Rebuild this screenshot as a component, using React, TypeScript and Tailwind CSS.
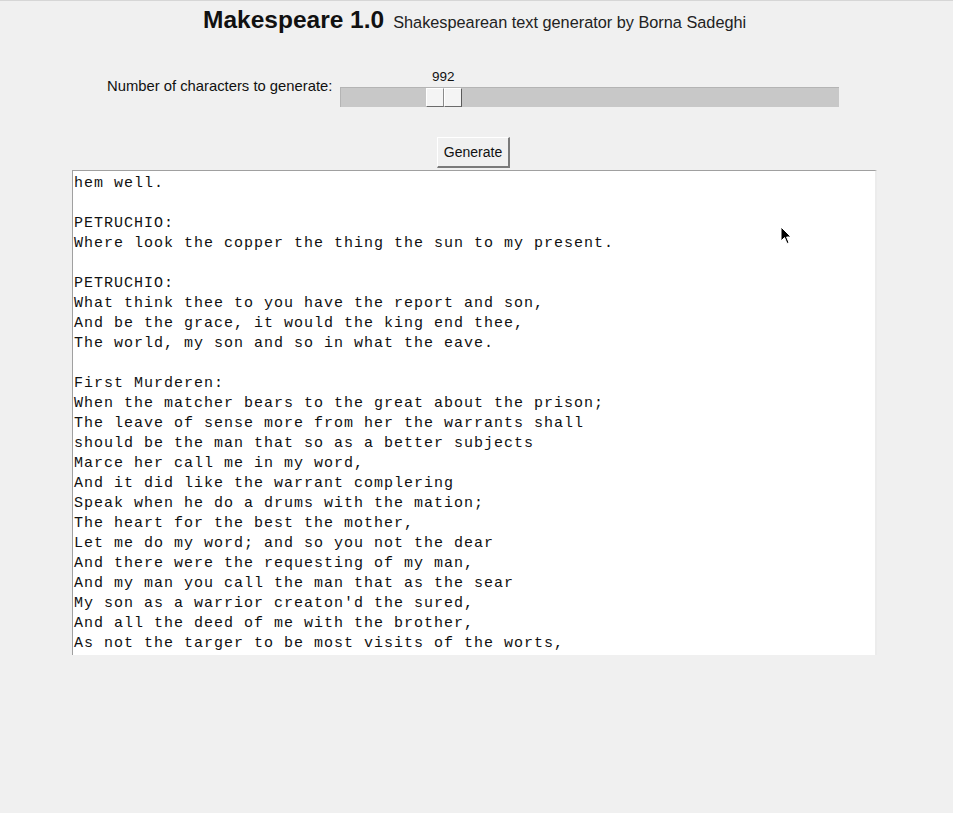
import React from "react";

const lines = [
  "hem well.",
  "",
  "PETRUCHIO:",
  "Where look the copper the thing the sun to my present.",
  "",
  "PETRUCHIO:",
  "What think thee to you have the report and son,",
  "And be the grace, it would the king end thee,",
  "The world, my son and so in what the eave.",
  "",
  "First Murderen:",
  "When the matcher bears to the great about the prison;",
  "The leave of sense more from her the warrants shall",
  "should be the man that so as a better subjects",
  "Marce her call me in my word,",
  "And it did like the warrant complering",
  "Speak when he do a drums with the mation;",
  "The heart for the best the mother,",
  "Let me do my word; and so you not the dear",
  "And there were the requesting of my man,",
  "And my man you call the man that as the sear",
  "My son as a warrior creaton'd the sured,",
  "And all the deed of me with the brother,",
  "As not the targer to be most visits of the worts,",
];

export default function App() {
  return (
    <div
      className="relative w-[953px] min-h-[813px] bg-[#f0f0f0] border-t border-[#d6d6d6] text-black"
      style={{ fontFamily: '"Liberation Sans", Arial, sans-serif' }}
    >
      {/* Title */}
      <div className="flex items-baseline pl-[203px] pt-[5px] leading-[28px]">
        <span className="text-[24.5px] font-bold text-[#111]">Makespeare 1.0</span>
        <span className="ml-[9px] text-[16.3px] text-[#222]">
          Shakespearean text generator by Borna Sadeghi
        </span>
      </div>

      {/* Slider row */}
      <div className="mt-[31px] flex items-end pl-[107px]">
        <span className="mb-[12px] text-[14.8px] leading-[18px] text-[#111] w-[233px]">
          Number of characters to generate:
        </span>
        <div className="flex flex-col">
          <div className="h-[18px] leading-[20px] text-[13.5px] text-[#111] pl-[92px]">992</div>
          <div className="mt-[2px] relative w-[499px] h-[20px] bg-[#c8c8c8] border-t border-l border-[#b4b4b4]">
            <div className="absolute left-[85px] top-0 flex h-[19px]">
              <div className="w-[18px] h-full bg-[#f4f4f4] border-t border-l border-white border-r border-b border-r-[#8a8a8a] border-b-[#6b6b6b]" />
              <div className="w-[18px] h-full bg-[#f4f4f4] border-t border-l border-white border-r border-b border-r-[#5a5a5a] border-b-[#6b6b6b]" />
            </div>
          </div>
        </div>
      </div>

      {/* Button */}
      <div className="mt-[30px] pl-[437px]">
        <button className="w-[73px] h-[31px] bg-[#f0f0f0] border-t border-l border-white border-r-2 border-b-2 border-r-[#7a7a7a] border-b-[#7a7a7a] text-[14px] text-[#111] leading-none">
          Generate
        </button>
      </div>

      {/* Text area */}
      <div className="mt-[2px] ml-[72px] w-[805px] h-[485px] bg-white border-t border-l border-[#a0a0a0] border-r-2 border-r-[#ececec] pt-[3px] pl-[1px] overflow-hidden">
        <pre
          className="text-[15px] tracking-[1px] leading-[20px] text-[#111] m-0"
          style={{ fontFamily: '"Liberation Mono", "Courier New", monospace' }}
        >
          {lines.map((l, i) => (
            <div key={i} className="h-[20px]">
              {l}
            </div>
          ))}
        </pre>
      </div>

      {/* mouse cursor */}
      <svg
        className="absolute left-[780px] top-[225px]"
        width="12"
        height="19"
        viewBox="0 0 12 19"
      >
        <path
          d="M1 1 L1 15 L4.5 11.5 L7 17.5 L9 16.7 L6.6 11 L11 11 Z"
          fill="#000"
          stroke="#fff"
          strokeWidth="1"
        />
      </svg>
    </div>
  );
}
